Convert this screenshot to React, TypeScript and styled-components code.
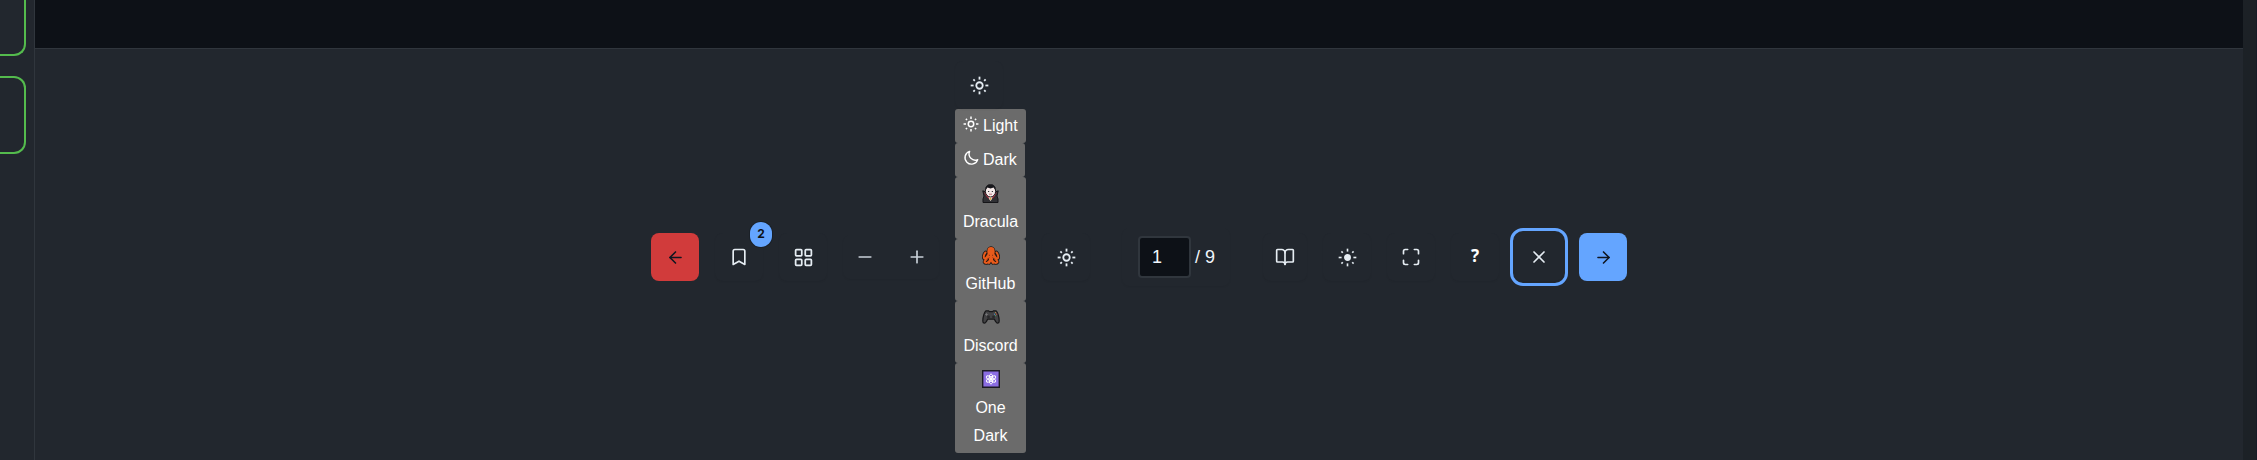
import React from "react";
import styled, { createGlobalStyle, css } from "styled-components";
import { ArrowLeft, ArrowRight, Bookmark, BookOpen, LayoutGrid, Maximize, Minus, Plus, X } from "lucide-react";

const GlobalStyle = createGlobalStyle`
  *, *::before, *::after { box-sizing: border-box; }
  body { margin: 0; background: #22272e; overflow: hidden; }
  button { font: inherit; cursor: pointer; }
`;

const Page = styled.div`
  display: flex;
  height: 460px;
  background: #22272e;
  color: #e6edf3;
  font: 16px/28px "Liberation Sans", Arial, sans-serif;
`;
const Sidebar = styled.aside`
  flex: 0 0 35px;
  border-right: 1px solid #30363d;
  display: flex;
  flex-direction: column;
  gap: 20px;
  overflow: hidden;
`;
const Thumbnail = styled.div<{ $cut?: boolean }>`
  flex: none;
  width: 26px;
  height: ${(p) => (p.$cut ? 56 : 78)}px;
  border: 2px solid #54bb4d;
  border-left: 0;
  border-top-width: ${(p) => (p.$cut ? 0 : 2)}px;
  border-radius: ${(p) => (p.$cut ? "0 0 12px 0" : "0 12px 12px 0")};
`;
const Main = styled.main`
  flex: 1;
  display: flex;
  flex-direction: column;
`;
const Viewer = styled.div`
  height: 49px;
  flex: none;
  background: #0d1117;
  border-bottom: 1px solid #30363d;
`;
const Toolbar = styled.div`
  flex: 1;
  display: flex;
  align-items: center;
  justify-content: center;
  padding-top: 5px;
`;
const Gutter = styled.div`
  flex: 0 0 14px;
  background: #1c2126;
  border-right: 1px solid #171b27;
`;

const faint = css`box-shadow: 0 1px 2px rgba(0, 0, 0, 0.05);`;

const ToolButton = styled.button<{ $tone?: "red" | "blue"; $gap?: number; $width?: number; $focused?: boolean }>`
  position: relative;
  flex: none;
  width: ${(p) => p.$width ?? 48}px;
  height: 48px;
  margin: 0 0 0 ${(p) => p.$gap ?? 16}px;
  padding: 0;
  border: 0;
  border-radius: 8px;
  display: flex;
  align-items: center;
  justify-content: center;
  background: ${(p) => (p.$tone === "red" ? "#d13b3b" : p.$tone === "blue" ? "#64a5ff" : "#22272e")};
  color: ${(p) => (p.$tone ? "#101620" : "#e6edf3")};
  ${(p) => !p.$tone && faint}
  ${(p) => p.$focused && css`outline: 3px solid #64a5ff; outline-offset: 2px;`}
`;
const Badge = styled.span`
  position: absolute;
  right: -9px;
  top: -11px;
  width: 22px;
  height: 25px;
  border-radius: 11px;
  background: #64a5ff;
  color: #0d1117;
  font: 700 12px/24px Inter, sans-serif;
  text-align: center;
  box-shadow: 0 0 0 1px #1a2028;
`;
const ZoomGroup = styled.div`
  display: flex;
  width: 96px;
  height: 44px;
  margin-left: 16px;
  border-radius: 8px;
  ${faint}
`;
const ZoomButton = styled.button`
  width: 44px;
  padding: 0;
  border: 0;
  background: none;
  color: #c9d1d9;
  display: flex;
  align-items: center;
  justify-content: center;
  & + & { margin-left: 8px; }
`;
const ThemePicker = styled.div`
  width: 71px;
  margin-left: 16px;
  display: flex;
  flex-direction: column;
  align-items: flex-start;
`;
const ThemeOption = styled.button<{ $height: number; $width?: number; $inline?: boolean }>`
  width: ${(p) => p.$width ?? 71}px;
  height: ${(p) => p.$height}px;
  padding: ${(p) => (p.$inline ? "3px 8px" : "1px 6px")};
  border: 0;
  border-radius: 3px;
  background: #6b6b6b;
  color: #fff;
  display: flex;
  flex-direction: ${(p) => (p.$inline ? "row" : "column")};
  align-items: center;
  justify-content: ${(p) => (p.$inline ? "flex-start" : "center")};
  gap: ${(p) => (p.$inline ? 4 : 0)}px;
  line-height: 28px;
`;
const InlineIcon = styled.span`
  display: flex;
  margin-top: -5px;
`;
const EmojiBox = styled.span`
  height: 28px;
  display: flex;
  align-items: center;
  justify-content: center;
  padding-bottom: 2px;
`;
const PageGroup = styled.div`
  display: flex;
  align-items: center;
  width: 108px;
  height: 58px;
  margin-left: 32px;
  padding-left: 16px;
  border-radius: 8px;
  font-size: 18px;
  color: #f0f6fc;
  ${faint}
`;
const PageInput = styled.input`
  width: 53px;
  height: 42px;
  padding: 0 26px 0 12px;
  margin: 0 4px 0 0;
  border: 2px solid #30363d;
  border-radius: 4px;
  background: #0d1117;
  color: #f0f6fc;
  font: 18px "Liberation Sans", Arial, sans-serif;
`;
const HelpMark = styled.span`
  font: 700 17px/24px "Noto Sans", sans-serif;
  color: #fff;
  margin-top: -2px;
`;

const rays = [0, 45, 90, 135, 180, 225, 270, 315];
const SunIcon = ({ size = 19, solid = false }: { size?: number; solid?: boolean }) => (
  <svg width={size} height={size} viewBox="0 0 20 20" fill="none" stroke="currentColor" strokeWidth={solid ? 1.7 : 1.9}>
    <circle cx="10" cy="10" r={solid ? 2.8 : 3.4} fill={solid ? "currentColor" : "none"} />
    {rays.map((a) => (
      <path key={a} d={a % 90 ? "M10 .9v2.1" : "M10 .7v3.1"} transform={`rotate(${a} 10 10)`} />
    ))}
  </svg>
);
const MoonIcon = () => (
  <svg width="16" height="16" viewBox="0 0 16 16" fill="none" stroke="currentColor" strokeWidth="1.4" strokeLinejoin="round">
    <path d="M6.6 1.4A6.5 6.5 0 1 0 14.7 9.6 6.2 6.2 0 0 1 6.6 1.4z" />
  </svg>
);

const Vampire = () => (
  <svg width="17" height="19" viewBox="0 0 17 19">
    <path d="M3.5 8 .8 6.8 2 12l-1 3v3.5h15V15l-1-3 1.2-5.2L13.5 8z" fill="#303034" stroke="#151518" />
    <path d="M2 8.3 5 13l3.5 3 3.5-3 3-4.7-2.5 1.5h-8z" fill="#c72f42" />
    <path d="M6.5 12h4l-.6 3-1.4 2-1.4-2z" fill="#eee" />
    <path d="M3.4 7.5C3.4 2.8 5 .6 8.5.6s5.1 2.2 5.1 6.9c0 3.4-2.6 5.5-5.1 5.5S3.4 10.9 3.4 7.5z" fill="#f5e9e8" stroke="#161619" />
    <path d="M3.4 6.3C3.3 2.2 5.2.4 8.5.4s5.2 1.8 5.1 5.9C12.7 5.6 12.2 4.4 11.6 3.4L8.5 4.6 5.4 3.4C4.8 4.4 4.3 5.6 3.4 6.3z" fill="#18181c" />
    <path d="M6.1 7.5h1.1m2.6 0h1.1" stroke="#242428" strokeWidth="1.2" />
    <path d="M7 10.2h3" stroke="#ac5260" strokeWidth=".8" />
    <path d="m8.5 13.2 1.1 1.4-1.1 1.8-1.1-1.8z" fill="#dba13a" />
  </svg>
);
const Octopus = () => (
  <svg width="18" height="19" viewBox="0 0 18 19" strokeLinecap="round" strokeLinejoin="round">
    {["#211713", "#e85b1c"].map((c, i) => (
      <g key={c} stroke={c} strokeWidth={i ? 2 : 3.6} fill="none">
        <path d="M7 8C5 10 4.5 13 2.5 12.5 1 12 2 8 3.5 6.5M11 8c2 2 2.5 5 4.5 4.5 1.5-.5.5-4.5-1-6M7 10c0 3-4 3-4.5 6 1 1.7 3.8 1 4.7-1M11 10c0 3 4 3 4.5 6-1 1.7-3.8 1-4.7-1M8 11v4.5l-1 1.4M10 11v4.5l1 1.4" />
        <ellipse cx="9" cy="5.4" rx="2.7" ry="3.4" fill={c} />
        <path d="M7.5 9h3l1 3H6.5z" fill={c} />
      </g>
    ))}
    <path d="M7.3 9.3h.1m3.2 0h.1M5 13.5l2-1.5m6 1.5L11 12" stroke="#6d2511" strokeWidth="1" />
  </svg>
);
const Gamepad = () => (
  <svg width="18" height="14" viewBox="0 0 18 14">
    <path d="M4 .8h2.5l1 .9h3l1-.9H14c1.6 1 3.2 6 3.2 10.2 0 2.6-2.4 2.8-3.5.6l-1.4-2.4H5.7l-1.4 2.4C3.2 13.8.8 13.6.8 11 .8 6.8 2.4 1.8 4 .8z" fill="#434345" stroke="#171719" strokeWidth="1.2" />
    <circle cx="6.5" cy="7" r="1.4" fill="#29292b" />
    <circle cx="11.5" cy="7" r="1.4" fill="#29292b" />
    <path d="M3.2 4.5h2.6M4.5 3.2v2.6" stroke="#77777b" strokeWidth=".9" />
    <path d="M12 4.2h1" stroke="#4c9ae0" />
    <path d="M14.2 4.2h1" stroke="#e34f45" />
    <path d="M13.1 2.7h1" stroke="#d49b42" />
    <path d="M13.1 5.7h1" stroke="#4bad68" />
  </svg>
);
const Atom = () => (
  <svg width="18" height="18" viewBox="0 0 18 18" fill="none">
    <path d="M.7.7h16.6v16.6H.7z" fill="#8b6de3" stroke="#1c1a24" strokeWidth="1.4" />
    <g stroke="#fff" strokeWidth="1">
      {[0, 60, 120].map((a) => (
        <ellipse key={a} cx="9" cy="9" rx="1.9" ry="5.2" transform={`rotate(${a} 9 9)`} />
      ))}
    </g>
    <circle cx="9" cy="9" r="1.2" fill="#fff" />
  </svg>
);

export default function App() {
  return (
    <>
      <GlobalStyle />
      <Page>
        <Sidebar>
          <Thumbnail $cut />
          <Thumbnail />
        </Sidebar>
        <Main>
          <Viewer />
          <Toolbar>
            <ToolButton $tone="red" $gap={0} aria-label="Previous page"><ArrowLeft size={19} /></ToolButton>
            <ToolButton aria-label="Bookmarks"><Bookmark size={20} /><Badge>2</Badge></ToolButton>
            <ToolButton aria-label="Page grid"><LayoutGrid size={21} /></ToolButton>
            <ZoomGroup>
              <ZoomButton aria-label="Zoom out"><Minus size={20} /></ZoomButton>
              <ZoomButton aria-label="Zoom in"><Plus size={20} /></ZoomButton>
            </ZoomGroup>
            <ThemePicker>
              <ToolButton $gap={0} aria-label="Theme"><SunIcon /></ToolButton>
              <ThemeOption $height={34} $inline><InlineIcon><SunIcon size={16} /></InlineIcon>Light</ThemeOption>
              <ThemeOption $height={34} $width={70} $inline><InlineIcon><MoonIcon /></InlineIcon>Dark</ThemeOption>
              <ThemeOption $height={62}><EmojiBox><Vampire /></EmojiBox>Dracula</ThemeOption>
              <ThemeOption $height={62}><EmojiBox><Octopus /></EmojiBox>GitHub</ThemeOption>
              <ThemeOption $height={62}><EmojiBox><Gamepad /></EmojiBox>Discord</ThemeOption>
              <ThemeOption $height={90}><EmojiBox><Atom /></EmojiBox>One<br />Dark</ThemeOption>
            </ThemePicker>
            <ToolButton aria-label="Brightness"><SunIcon /></ToolButton>
            <PageGroup><PageInput defaultValue="1" aria-label="Page" /><span>/ 9</span></PageGroup>
            <ToolButton $gap={33} $width={44} aria-label="Two page view"><BookOpen size={20} /></ToolButton>
            <ToolButton aria-label="Ambient light"><SunIcon solid /></ToolButton>
            <ToolButton aria-label="Fullscreen"><Maximize size={20} /></ToolButton>
            <ToolButton aria-label="Help"><HelpMark>?</HelpMark></ToolButton>
            <ToolButton $focused aria-label="Close"><X size={20} /></ToolButton>
            <ToolButton $tone="blue" aria-label="Next page"><ArrowRight size={19} /></ToolButton>
          </Toolbar>
        </Main>
        <Gutter />
      </Page>
    </>
  );
}
